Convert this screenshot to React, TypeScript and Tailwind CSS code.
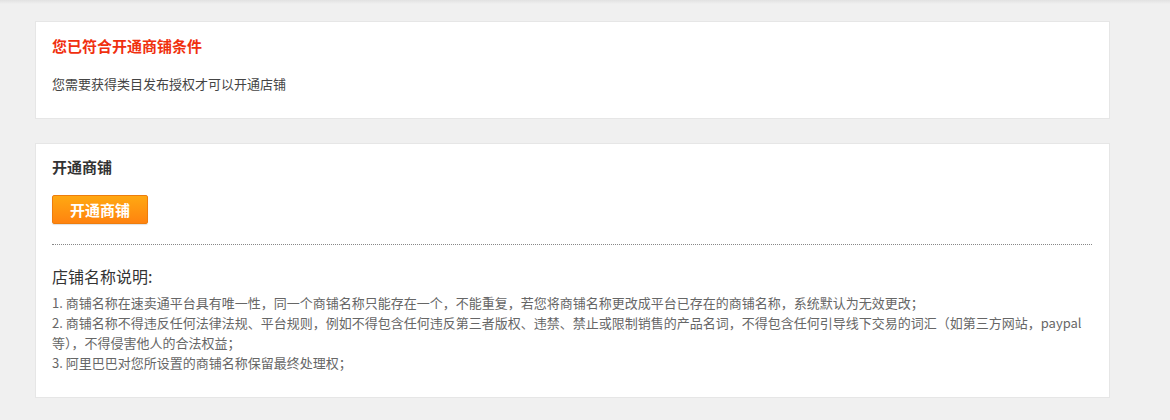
import React from "react";

export default function App() {
  return (
    <div
      className="w-[1170px] h-[420px] bg-[#f0f0f0] overflow-hidden relative"
      style={{ fontFamily: '"Noto Sans CJK SC", "Noto Sans", sans-serif' }}
    >
      <div className="absolute top-0 left-0 right-0 h-[4px] bg-gradient-to-b from-[#e2e2e2] to-[#f0f0f0]" />
      <div className="ml-[35px] w-[1075px] pt-[21px] flex flex-col gap-[24px]">
        <div className="bg-white border border-[#e6e6e6] h-[98px] px-[16px] pt-[13px]">
          <div className="text-[15px] font-bold text-[#f0300f] leading-[22px]">您已符合开通商铺条件</div>
          <div className="text-[13px] text-[#444] leading-[20px] mt-[17px]">您需要获得类目发布授权才可以开通店铺</div>
        </div>
        <div className="bg-white border border-[#e6e6e6] h-[255px] px-[16px] pt-[12px]">
          <div className="text-[15px] font-bold text-[#333] leading-[22px]">开通商铺</div>
          <button className="mt-[17px] w-[96px] h-[29px] rounded-[2px] border border-[#ee7d0c] bg-gradient-to-b from-[#ffa812] to-[#ff830f] text-white text-[15px] font-bold leading-[27px] shadow-[0_1px_1px_rgba(0,0,0,0.12)]">
            开通商铺
          </button>
          <div className="mt-[20px] mr-[1px] border-t border-dotted border-[#888]" />
          <div className="mt-[20px] text-[16px] font-normal text-[#333] leading-[22px]">店铺名称说明:</div>
          <div className="mt-[6px] text-[13px] text-[#666] leading-[20px]">
            <div>1. 商铺名称在速卖通平台具有唯一性，同一个商铺名称只能存在一个，不能重复，若您将商铺名称更改成平台已存在的商铺名称，系统默认为无效更改；</div>
            <div>2. 商铺名称不得违反任何法律法规、平台规则，例如不得包含任何违反第三者版权、违禁、禁止或限制销售的产品名词，不得包含任何引导线下交易的词汇（如第三方网站，paypal等），不得侵害他人的合法权益；</div>
            <div>3. 阿里巴巴对您所设置的商铺名称保留最终处理权；</div>
          </div>
        </div>
      </div>
    </div>
  );
}
